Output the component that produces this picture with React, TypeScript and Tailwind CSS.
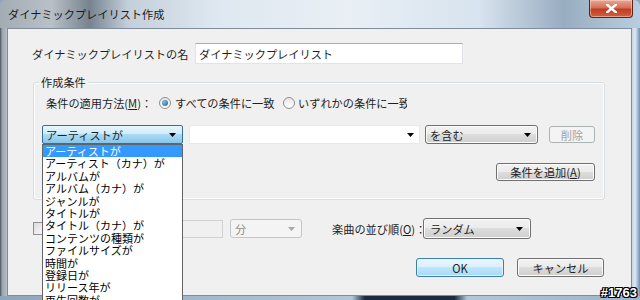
import React from "react";

const Arrow = ({ color = "#000" }: { color?: string }) => (
  <svg width="7" height="4" viewBox="0 0 7 4" className="shrink-0">
    <path d="M0 0h7L3.5 4z" fill={color} />
  </svg>
);

const items = [
  "アーティストが",
  "アーティスト（カナ）が",
  "アルバムが",
  "アルバム（カナ）が",
  "ジャンルが",
  "タイトルが",
  "タイトル（カナ）が",
  "コンテンツの種類が",
  "ファイルサイズが",
  "時間が",
  "登録日が",
  "リリース年が",
  "再生回数が",
  "最終再生日が",
];

export default function App() {
  return (
    <div className="relative w-[640px] h-[300px] overflow-hidden bg-[#8fa6bd] [font-family:'Noto_Sans_CJK_JP','Noto_Sans',sans-serif] text-[11.2px] text-[#1e1e1e]">
      {/* title bar */}
      <div className="h-[28px] flex items-start justify-between rounded-t-[6px] bg-[linear-gradient(90deg,#a3abb3_0%,#b9c0c7_8%,#77838e_14%,#c3cfda_20%,#dfe8f0_34%,#e9eff5_55%,#d7e3ee_75%,#99adc1_88%,#b9cde0_100%)]">
        <div className="pl-[8px] pt-[6px] leading-[16px] text-[#1a1a1a]">ダイナミックプレイリスト作成</div>
        <div className="mr-[7px] w-[44px] h-[18px] rounded-b-[4px] border border-t-0 border-[#5e2218] bg-[linear-gradient(#e9a795,#d4705a_45%,#c23c24_55%,#d0603f)] flex items-center justify-center shadow-[inset_0_0_0_1px_rgba(255,220,210,0.5)]">
          <svg width="11" height="9" viewBox="0 0 11 9">
            <path d="M1 0.5 L10 8.5 M10 0.5 L1 8.5" stroke="#fff" strokeWidth="2.4" strokeLinecap="square" />
          </svg>
        </div>
      </div>

      {/* body */}
      <div className="flex h-[268px]">
        <div className="w-[7px] bg-[linear-gradient(90deg,#46515c_0px,#9aa3ac_2px,#b7bfc6_7px)]" />
        <div className="w-[625px] border border-[#7f8d9a] bg-[#f0f0f0]">
          {/* name row */}
          <div className="flex items-center pt-[14px] pl-[24px]">
            <div className="w-[163px] leading-[16px]">ダイナミックプレイリストの名</div>
            <div className="w-[268px] h-[21px] bg-white border border-[#e2e3ea] border-t-[#abadb3] flex items-center pl-[3px] leading-[16px]">
              ダイナミックプレイリスト
            </div>
          </div>

          {/* group box */}
          <div className="relative mt-[18px] ml-[25px] w-[572px] h-[118px] rounded-[3px] border border-[#d5dfe5] shadow-[inset_0_0_0_1px_#ffffff]">
            <div className="absolute left-[5px] -top-[8px] px-[2px] bg-[#f0f0f0] leading-[14px]">作成条件</div>

            <div className="flex items-center pt-[12px] pl-[12px] h-[28px]">
              <div className="w-[113px] leading-[16px] whitespace-nowrap">
                条件の適用方法(<span className="underline">M</span>)：
              </div>
              <span className="w-[12px] h-[12px] rounded-full border border-[#8e8f8f] bg-[linear-gradient(#e6e6e6,#ffffff)] flex items-center justify-center">
                <span className="w-[6px] h-[6px] rounded-full bg-[radial-gradient(circle_at_35%_35%,#7cc0ea,#1d5a94)]" />
              </span>
              <span className="ml-[4px] w-[107px] leading-[16px] whitespace-nowrap overflow-hidden">すべての条件に一致</span>
              <span className="ml-[1px] w-[12px] h-[12px] rounded-full border border-[#8e8f8f] bg-[linear-gradient(#e6e6e6,#ffffff)]" />
              <span className="ml-[3px] w-[109px] leading-[16px] whitespace-nowrap overflow-hidden">いずれかの条件に一致</span>
            </div>

            <div className="flex items-center mt-[14px] pl-[8px] h-[19px]">
              <div className="w-[141px] h-[19px] rounded-[2px] border border-[#3c6d93] bg-[linear-gradient(#e8f5fc,#cfeaf8_50%,#a9dbf5_50%,#86c6ea)] flex items-center justify-between pl-[3px] pr-[6px] leading-[16px]">
                <span>アーティストが</span>
                <Arrow />
              </div>
              <div className="ml-[6px] w-[231px] h-[19px] bg-white border border-[#e6e8ec] flex items-center justify-end pr-[5px]">
                <Arrow />
              </div>
              <div className="ml-[5px] w-[113px] h-[19px] rounded-[3px] border border-[#707070] bg-[linear-gradient(#f2f2f2,#ebebeb_50%,#dddddd_50%,#cfcfcf)] shadow-[inset_0_0_0_1px_#fcfcfc] flex items-center justify-between pl-[4px] pr-[6px] leading-[16px]">
                <span>を含む</span>
                <Arrow />
              </div>
              <div className="ml-[11px] w-[46px] h-[17px] rounded-[3px] border border-[#adb2b5] bg-[#f4f4f4] flex items-center justify-center text-[#a3a3a3] leading-[16px]">
                削除
              </div>
            </div>

            <div className="flex justify-end mt-[19px] pr-[9px]">
              <div className="w-[99px] h-[18px] rounded-[3px] border border-[#707070] bg-[linear-gradient(#f2f2f2,#ebebeb_50%,#dddddd_50%,#cfcfcf)] shadow-[inset_0_0_0_1px_#fcfcfc] flex items-center justify-center leading-[16px]">
                条件を追加(<span className="underline">A</span>)
              </div>
            </div>
          </div>

          {/* limit / sort row */}
          <div className="flex items-center mt-[18px] pl-[25px] h-[21px]">
            <span className="w-[13px] h-[13px] border border-[#8f8f8f] bg-[linear-gradient(135deg,#dcdcdc,#fbfbfb)]" />
            <div className="ml-[104px] w-[73px] h-[18px] border border-[#cfd1d4] bg-[#f0f0f0]" />
            <div className="ml-[7px] w-[72px] h-[19px] rounded-[3px] border border-[#c3c6c9] bg-[#f4f4f4] flex items-center justify-between pl-[4px] pr-[6px] text-[#8d8d8d] leading-[16px]">
              <span>分</span>
              <Arrow color="#a8a8a8" />
            </div>
            <div className="ml-[30px] w-[91px] leading-[16px] whitespace-nowrap">
              楽曲の並び順(<span className="underline">O</span>)：
            </div>
            <div className="w-[108px] h-[21px] rounded-[3px] border border-[#707070] bg-[linear-gradient(#f2f2f2,#ebebeb_50%,#dddddd_50%,#cfcfcf)] shadow-[inset_0_0_0_1px_#fcfcfc] flex items-center justify-between pl-[6px] pr-[7px] leading-[16px]">
              <span>ランダム</span>
              <Arrow />
            </div>
          </div>

          {/* buttons */}
          <div className="flex justify-end gap-[13px] mt-[19px] pr-[27px]">
            <div className="w-[88px] h-[19px] rounded-[3px] border border-[#3c7fb1] bg-[linear-gradient(#eaf6fd,#d9f0fc_50%,#bee6fd_50%,#a7d9f5)] shadow-[inset_0_0_0_1px_#dff3fc] flex items-center justify-center leading-[16px]">
              OK
            </div>
            <div className="w-[87px] h-[19px] rounded-[3px] border border-[#707070] bg-[linear-gradient(#f2f2f2,#ebebeb_50%,#dddddd_50%,#cfcfcf)] shadow-[inset_0_0_0_1px_#fcfcfc] flex items-center justify-center leading-[16px]">
              キャンセル
            </div>
          </div>
        </div>
        <div className="w-[8px] bg-[linear-gradient(90deg,#c6d6e5,#dce8f3_40%,#6f8fb2_100%)]" />
      </div>
      <div className="h-[4px] bg-[linear-gradient(90deg,#8ea5bb_0%,#b3c6d8_55%,#1d2a40_57%,#1d2a40_71%,#b3c6d8_73%,#9cb3c9_100%)]" />

      {/* open dropdown list */}
      <div className="absolute left-[42px] top-[144px] w-[141px] border border-[#646464] bg-white text-black text-[11px]">
        {items.map((t, i) => (
          <div
            key={t}
            className={
              i === 0
                ? "h-[12.4px] leading-[12.4px] pl-[2px] whitespace-nowrap bg-[#3399ff] text-white"
                : "h-[12.4px] leading-[12.4px] pl-[2px] whitespace-nowrap"
            }
          >
            {t}
          </div>
        ))}
      </div>

      {/* watermark */}
      <div className="absolute right-[3px] bottom-[1px] text-[13px] leading-[13px] font-bold text-white [font-family:'Liberation_Sans',sans-serif] [text-shadow:-1px_0_#000,1px_0_#000,0_-1px_#000,0_1px_#000,1px_1px_#000,-1px_-1px_#000,1px_-1px_#000,-1px_1px_#000]">
        #1763
      </div>
    </div>
  );
}
